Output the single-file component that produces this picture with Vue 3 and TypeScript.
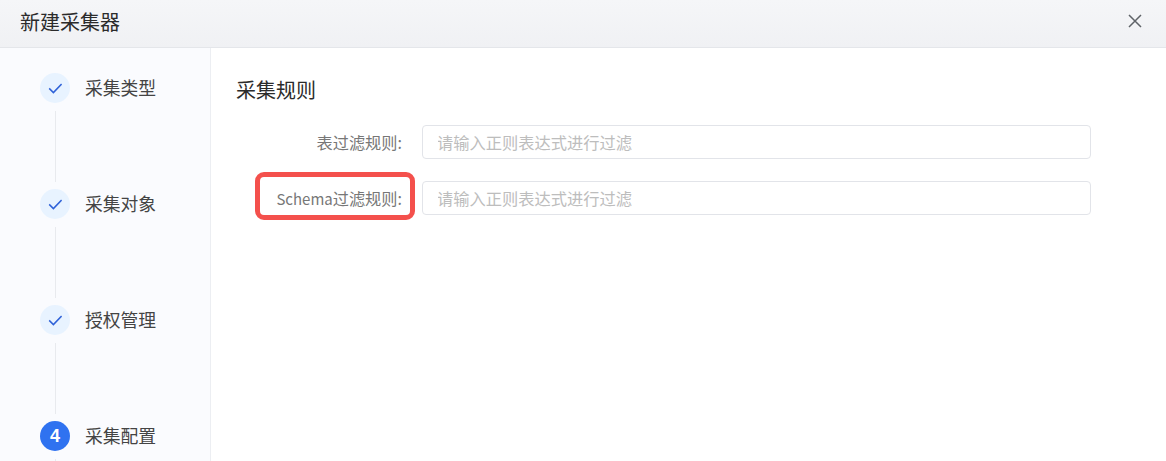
<template>
  <div class="dialog">
    <header class="dialog-header">
      <span class="dialog-title">新建采集器</span>
      <svg class="close-icon" viewBox="0 0 14 14" width="14" height="14" fill="none" stroke="#5f6368" stroke-width="1.5">
        <path d="M1 1L13 13M13 1L1 13" />
      </svg>
    </header>
    <div class="dialog-body">
      <aside class="steps">
        <div v-for="(step, i) in steps" :key="step" class="step">
          <div class="step-head">
            <span class="step-dot" :class="{ active: i === current }">
              <svg v-if="i < current" viewBox="0 0 14 14" width="14" height="14" fill="none" stroke="#2f62d8" stroke-width="1.5">
                <path d="M1.2 7.4L5.4 11.6L13.6 3" />
              </svg>
              <template v-else>{{ i + 1 }}</template>
            </span>
            <span class="step-label">{{ step }}</span>
          </div>
          <div class="step-line"></div>
        </div>
      </aside>
      <main class="content">
        <h2 class="section-title">采集规则</h2>
        <div class="form">
          <div v-for="rule in rules" :key="rule.label" class="form-row">
            <label class="form-label">
              <span v-if="rule.prefix" class="latin">{{ rule.prefix }}</span>{{ rule.label }}:
              <span v-if="rule.marked" class="marker"></span>
            </label>
            <input class="form-input" type="text" placeholder="请输入正则表达式进行过滤" />
          </div>
        </div>
      </main>
    </div>
  </div>
</template>

<script setup lang="ts">
const steps: string[] = ['采集类型', '采集对象', '授权管理', '采集配置']
const current = 3

const rules: { label: string; prefix?: string; marked?: boolean }[] = [
  { label: '表过滤规则' },
  { label: '过滤规则', prefix: 'Schema', marked: true },
]
</script>

<style>
html,
body {
  margin: 0;
  background: #fff;
}
</style>

<style scoped>
.dialog {
  width: 1166px;
  height: 461px;
  overflow: hidden;
  display: flex;
  flex-direction: column;
  font-family: "Noto Sans CJK SC", "Liberation Sans", sans-serif;
  color: #333;
}

.dialog-header {
  flex: none;
  box-sizing: border-box;
  height: 48px;
  padding: 0 24px 0 20px;
  display: flex;
  align-items: center;
  justify-content: space-between;
  background: linear-gradient(#f5f6f8, #f0f1f4);
  border-bottom: 1px solid #e4e6ea;
}

.dialog-title {
  font-size: 20px;
  line-height: 44px;
  margin-top: -4px;
  color: #2b2b2b;
}

.close-icon {
  margin-top: -5px;
}

.dialog-body {
  flex: 1;
  min-height: 0;
  display: flex;
}

.steps {
  flex: none;
  box-sizing: border-box;
  width: 211px;
  padding: 25px 0 0 40px;
  background: #fafbfe;
  border-right: 1px solid #eceef2;
}

.step-head {
  display: flex;
  align-items: center;
  gap: 15px;
  height: 30px;
}

.step-dot {
  flex: none;
  width: 30px;
  height: 30px;
  border-radius: 50%;
  display: flex;
  align-items: center;
  justify-content: center;
  background: #e8f3ff;
  font-family: "Liberation Sans", sans-serif;
  font-size: 18px;
  font-weight: 700;
  color: #fff;
}

.step-dot.active {
  background: #2f72f0;
}

.step-label {
  font-size: 17.8px;
  line-height: 28px;
  padding-bottom: 2px;
  color: #444;
}

.step-line {
  width: 1px;
  height: 71px;
  margin: 8px 0 7px 15px;
  background: #e8eaee;
}

.content {
  flex: 1;
  min-width: 0;
  padding: 27px 75px 0 25px;
}

.section-title {
  margin: 0 0 20px;
  font-size: 20px;
  font-weight: 400;
  line-height: 30px;
  color: #2b2b2b;
}

.form {
  display: flex;
  flex-direction: column;
  gap: 22px;
}

.form-row {
  display: flex;
  align-items: center;
  gap: 20px;
  height: 34px;
}

.form-label {
  position: relative;
  flex: none;
  box-sizing: border-box;
  width: 166px;
  height: 34px;
  text-align: right;
  font-size: 16.2px;
  line-height: 34px;
  color: #777;
  white-space: nowrap;
}

.latin {
  font-size: 15px;
}

.marker {
  position: absolute;
  left: 19px;
  right: -13px;
  top: -9px;
  bottom: -5px;
  box-sizing: border-box;
  border: 5px solid #f4504c;
  border-radius: 9px;
}

.form-input {
  flex: 1;
  min-width: 0;
  box-sizing: border-box;
  height: 34px;
  padding: 0 14px 0 15px;
  border: 1px solid #e2e4e9;
  border-radius: 4px;
  outline: none;
  font-family: inherit;
  font-size: 16.25px;
  background: #fff;
  text-indent: -1px;
}

.form-input::placeholder {
  color: #bdbdbd;
  opacity: 1;
}
</style>
